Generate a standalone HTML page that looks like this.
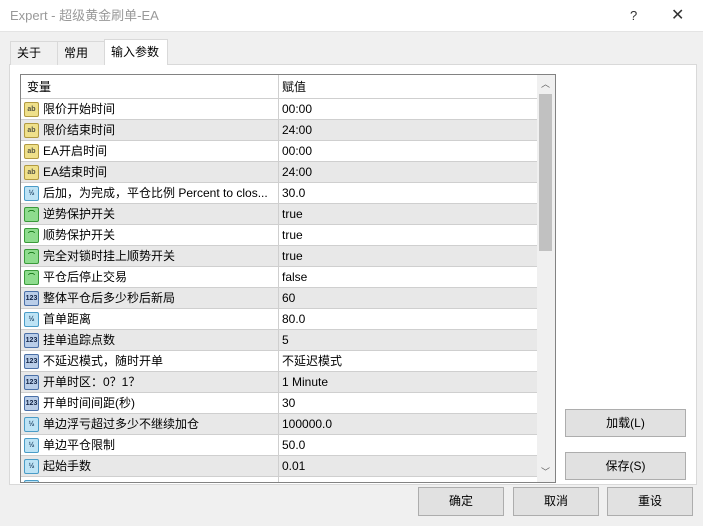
<!DOCTYPE html><html><head><meta charset="utf-8"><style>
*{margin:0;padding:0;box-sizing:border-box}
body{width:703px;height:526px;background:#f0f0f0;font-family:"Liberation Sans","Noto Sans CJK SC",sans-serif;font-size:12px;color:#000;position:relative;overflow:hidden}
.abs{position:absolute}
.title{left:0;top:0;width:703px;height:32px;background:#fff;border-bottom:1px solid #e4e4e4}
.title span{position:absolute;left:10px;top:0;line-height:32px;font-size:13px;color:#999}
.tab{top:41px;height:24px;border:1px solid #d9d9d9;border-bottom:none;background:#f0f0f0;line-height:22px;padding:0 6px;font-size:12px}
.panel{left:9px;top:64px;width:688px;height:421px;background:#fff;border:1px solid #d9d9d9}
.list{left:20px;top:74px;width:536px;height:409px;border:1px solid #828282;background:#fff;overflow:hidden}
.row{position:absolute;left:0;width:516px;height:21px;border-bottom:1px solid #cfcfcf}
.row .n{position:absolute;left:22px;top:0;line-height:20px;white-space:nowrap}
.row .v{position:absolute;left:261px;top:0;line-height:20px}
.row .sep{position:absolute;left:257px;top:0;width:1px;height:21px;background:#cfcfcf}
.ic{position:absolute;left:3px;top:3px;width:15px;height:15px;border-radius:2px;font-size:7px;line-height:13px;text-align:center;font-weight:bold}
.ab{background:#efe08a;border:1px solid #b29a40;color:#554}
.hf{background:#bde3f5;border:1px solid #4a9cc7;color:#246}
.bo{background:#8edc8e;border:1px solid #3a9a3a;color:#060}
.nm{background:#b9cde8;border:1px solid #4a70a8;color:#124}
.btn{background:#e1e1e1;border:1px solid #adadad;text-align:center;line-height:26px;font-size:12px}
</style></head><body>
<div class="abs title"><span>Expert - 超级黄金刷单-EA</span><span style="left:630px;color:#333">?</span><span style="left:671px;font-size:16px;color:#333">✕</span></div>
<div class="abs panel"></div>
<div class="abs tab" style="left:10px;width:48px">关于</div>
<div class="abs tab" style="left:57px;width:48px">常用</div>
<div class="abs tab" style="left:104px;top:39px;height:26px;width:64px;background:#fff;line-height:24px">输入参数</div>
<div class="abs list">
<div class="row" style="top:0;height:24px;background:#fff"><span class="n" style="left:6px;line-height:24px">变量</span><span class="v" style="line-height:24px">赋值</span><div class="sep" style="height:24px"></div></div>
<div id="rows"></div>
<div class="abs" style="left:516px;top:0;width:18px;height:407px;background:#f0f0f0"></div>
<div class="abs" style="left:518px;top:19px;width:13px;height:157px;background:#c1c1c1"></div>
<div class="abs" style="left:520px;top:2px;font-size:9px;color:#606060">︿</div>
<div class="abs" style="left:520px;top:390px;font-size:9px;color:#606060">﹀</div>
</div>
<div class="abs btn" style="left:565px;top:409px;width:121px;height:28px">加载(L)</div>
<div class="abs btn" style="left:565px;top:452px;width:121px;height:28px">保存(S)</div>
<div class="abs btn" style="left:418px;top:487px;width:86px;height:29px">确定</div>
<div class="abs btn" style="left:513px;top:487px;width:86px;height:29px">取消</div>
<div class="abs btn" style="left:607px;top:487px;width:86px;height:29px">重设</div>
<script>
var d=[["ab","限价开始时间","00:00"],["ab","限价结束时间","24:00"],["ab","EA开启时间","00:00"],["ab","EA结束时间","24:00"],["hf","后加，为完成，平仓比例 Percent to clos...","30.0"],["bo","逆势保护开关","true"],["bo","顺势保护开关","true"],["bo","完全对锁时挂上顺势开关","true"],["bo","平仓后停止交易","false"],["nm","整体平仓后多少秒后新局","60"],["hf","首单距离","80.0"],["nm","挂单追踪点数","5"],["nm","不延迟模式，随时开单","不延迟模式"],["nm","开单时区：0？1？","1 Minute"],["nm","开单时间间距(秒)","30"],["hf","单边浮亏超过多少不继续加仓","100000.0"],["hf","单边平仓限制","50.0"],["hf","起始手数","0.01"],["hf","","" ]];
var t={ab:"ab",hf:"½",bo:"⌒",nm:"123"},h="";
d.forEach(function(r,i){h+='<div class="row" style="top:'+(24+21*i)+'px;background:'+(i%2?'#e8e8e8':'#fff')+'"><div class="ic '+r[0]+'">'+t[r[0]]+'</div><span class="n">'+r[1]+'</span><div class="sep"></div><span class="v">'+r[2]+'</span></div>';});
document.getElementById("rows").outerHTML=h;
</script>
</body></html>
